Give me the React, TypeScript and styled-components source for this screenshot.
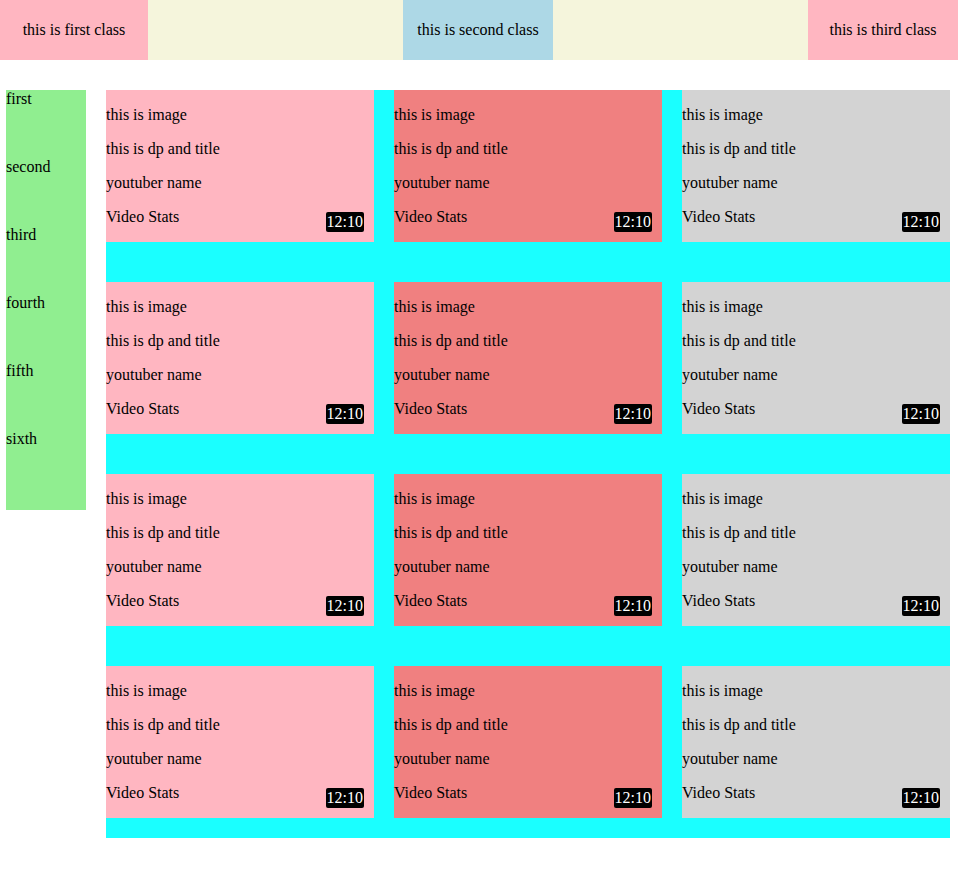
import React from "react";
import styled, { createGlobalStyle } from "styled-components";

const Global = createGlobalStyle`
  html, body { margin: 0; padding: 0; background: #fff; }
  body { font-family: "Liberation Serif", "Times New Roman", serif; font-size: 16px; color: #000; }
`;

const Header = styled.header`
  display: flex;
  justify-content: space-between;
  height: 60px;
  background: #f5f5dc;
`;

const HeaderBox = styled.div<{ $bg: string; $w: number }>`
  width: ${(p) => p.$w}px;
  background: ${(p) => p.$bg};
  display: flex;
  align-items: center;
  justify-content: center;
`;

const Main = styled.main`
  display: flex;
  align-items: flex-start;
  gap: 20px;
  padding: 30px 8px 34px 6px;
`;

const Sidebar = styled.nav`
  width: 80px;
  height: 420px;
  background: #90ee90;
  display: flex;
  flex-direction: column;
  gap: 50px;
  line-height: 18px;
`;

const Grid = styled.section`
  flex: 1;
  display: grid;
  grid-template-columns: repeat(3, 268px);
  column-gap: 20px;
  row-gap: 40px;
  padding-bottom: 20px;
  background: #1affff;
`;

const Card = styled.div<{ $bg: string }>`
  position: relative;
  background: ${(p) => p.$bg};
  padding: 16px 0;
  display: flex;
  flex-direction: column;
  gap: 16px;
  line-height: 18px;
`;

const Line = styled.div``;

const Badge = styled.span`
  position: absolute;
  right: 10px;
  bottom: 10px;
  background: #000;
  color: #fff;
  border-radius: 2px;
  padding: 1px 1px;
  line-height: 18px;
`;

const colors = ["#ffb6c1", "#f08080", "#d3d3d3"];

export default function App() {
  return (
    <>
      <Global />
      <Header>
        <HeaderBox $bg="#ffb6c1" $w={148}>this is first class</HeaderBox>
        <HeaderBox $bg="#add8e6" $w={150}>this is second class</HeaderBox>
        <HeaderBox $bg="#ffb6c1" $w={150}>this is third class</HeaderBox>
      </Header>
      <Main>
        <Sidebar>
          {["first", "second", "third", "fourth", "fifth", "sixth"].map((s) => (
            <div key={s}>{s}</div>
          ))}
        </Sidebar>
        <Grid>
          {Array.from({ length: 12 }).map((_, i) => (
            <Card key={i} $bg={colors[i % 3]}>
              <Line>this is image</Line>
              <Line>this is dp and title</Line>
              <Line>youtuber name</Line>
              <Line>Video Stats</Line>
              <Badge>12:10</Badge>
            </Card>
          ))}
        </Grid>
      </Main>
    </>
  );
}
